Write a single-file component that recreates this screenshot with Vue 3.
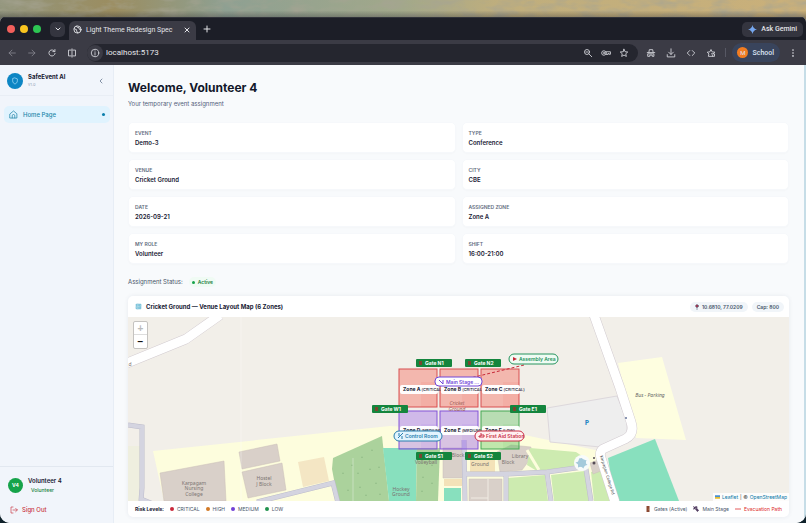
<script setup>
const details = [
  { label: 'Event', value: 'Demo-3' },
  { label: 'Type', value: 'Conference' },
  { label: 'Venue', value: 'Cricket Ground' },
  { label: 'City', value: 'CBE' },
  { label: 'Date', value: '2026-09-21' },
  { label: 'Assigned Zone', value: 'Zone A' },
  { label: 'My Role', value: 'Volunteer' },
  { label: 'Shift', value: '16:00-21:00' },
]

const zones = [
  { name: 'Zone A', level: 'CRITICAL', x: 399, y: 369, labelY: 385, tone: 'critical' },
  { name: 'Zone B', level: 'CRITICAL', x: 440, y: 369, labelY: 385, tone: 'critical' },
  { name: 'Zone C', level: 'CRITICAL', x: 481, y: 369, labelY: 385, tone: 'critical' },
  { name: 'Zone D', level: 'MEDIUM', x: 399, y: 411, labelY: 426, tone: 'medium' },
  { name: 'Zone E', level: 'MEDIUM', x: 440, y: 411, labelY: 426, tone: 'medium' },
  { name: 'Zone F', level: 'LOW', x: 481, y: 411, labelY: 426, tone: 'low' },
]

const gates = [
  { name: 'Gate N1', x: 416, y: 359 },
  { name: 'Gate N2', x: 465, y: 359 },
  { name: 'Gate W1', x: 372, y: 405 },
  { name: 'Gate E1', x: 510, y: 405 },
  { name: 'Gate S1', x: 416, y: 452 },
  { name: 'Gate S2', x: 465, y: 452 },
]

const risks = [
  { name: 'CRITICAL', tone: 'critical' },
  { name: 'HIGH', tone: 'high' },
  { name: 'MEDIUM', tone: 'medium' },
  { name: 'LOW', tone: 'low' },
]

const trees = [
  [343, 474], [352, 466], [362, 458], [372, 451], [348, 491], [360, 488], [358, 474], [370, 470],
  [376, 484], [379, 468], [366, 496], [380, 495], [422, 464], [432, 466], [423, 478], [432, 484], [422, 492],
]
</script>

<template>
  <div class="desktop">
    <svg class="wallpaper" aria-hidden="true" preserveAspectRatio="none" viewBox="0 0 806 30">
      <defs>
        <linearGradient id="paint" x1="0" x2="1">
          <stop offset="0" stop-color="#92957c" />
          <stop offset="0.14" stop-color="#9b8d60" />
          <stop offset="0.28" stop-color="#8ea092" />
          <stop offset="0.5" stop-color="#a2a88a" />
          <stop offset="0.62" stop-color="#bfae7d" />
          <stop offset="1" stop-color="#cab07a" />
        </linearGradient>
        <linearGradient id="shade" x2="0" y2="1">
          <stop offset="0.35" stop-color="#1c1e27" stop-opacity="0" />
          <stop offset="0.6" stop-color="#1c1e27" stop-opacity="0.35" />
        </linearGradient>
        <filter id="grain" x="0" y="0" width="1" height="1">
          <feTurbulence type="fractalNoise" baseFrequency="0.045 0.11" numOctaves="4" seed="8" />
          <feColorMatrix values="0 0 0 0 0.38  0 0 0 0 0.37  0 0 0 0 0.29  1.6 0 0 0 -0.65" />
        </filter>
      </defs>
      <rect width="806" height="30" fill="url(#paint)" />
      <rect width="806" height="30" filter="url(#grain)" />
      <rect width="806" height="30" fill="url(#shade)" />
    </svg>

    <div class="window">
      <header class="tabstrip">
        <div class="lights"><i class="red"></i><i class="yellow"></i><i class="green"></i></div>
        <button class="tab-menu" aria-label="Search tabs">
          <svg viewBox="0 0 8 8"><path d="M2 3l2 2 2-2" /></svg>
        </button>
        <div class="tab">
          <svg class="globe" viewBox="0 0 10 10">
            <circle cx="5" cy="5" r="4" />
            <path d="M1.3 4.2L4 5.2v1.4L5.2 8.800M4 1.200l.8 1.500 1.800.3L7 4.700l1.800 1.100" />
          </svg>
          <span>Light Theme Redesign Spec</span>
          <button aria-label="Close tab"><svg viewBox="0 0 8 8"><path d="M2 2l4 4M6 2L2 6" /></svg></button>
        </div>
        <button class="new-tab" aria-label="New tab"><svg viewBox="0 0 8 8"><path d="M4 1v6M1 4h6" /></svg></button>
        <button class="gemini">
          <svg viewBox="0 0 10 10"><path d="M5 0Q5.800 4.200 10 5 5.800 5.800 5 10 4.200 5.800 0 5 4.200 4.200 5 0z" /></svg>
          Ask Gemini
        </button>
      </header>

      <nav class="toolbar">
        <button class="tool dim" aria-label="Back"><svg viewBox="0 0 12 12"><path d="M10 6H2.500M6 2.500L2.500 6 6 9.500" /></svg></button>
        <button class="tool dim" aria-label="Forward"><svg viewBox="0 0 12 12"><path d="M2 6h7.500M6 2.500L9.500 6 6 9.500" /></svg></button>
        <button class="tool" aria-label="Reload"><svg viewBox="0 0 12 12"><path d="M9.200 4A3.700 3.700 0 1 0 9.700 6.500M9.500 1.800v2.500H7" /></svg></button>
        <button class="tool" aria-label="Split view"><svg viewBox="0 0 12 12"><path d="M5 2.500H1.800v7H5M7 2.500h3.200v7H7M6 1v10" /></svg></button>
        <div class="address">
          <span class="info"><svg viewBox="0 0 12 12"><circle cx="6" cy="6" r="4.500" /><path d="M6 5.500v3M6 3.500v.3" /></svg></span>
          <input type="text" value="localhost:5173" aria-label="Address" />
          <button class="tool" aria-label="Zoom"><svg viewBox="0 0 12 12"><circle cx="4.800" cy="4.800" r="3" /><path d="M7 7l3.500 3.500M3.500 4.800h2.600" /></svg></button>
          <button class="tool" aria-label="Passwords"><svg viewBox="0 0 12 12"><circle cx="3.500" cy="6" r="2.700" /><circle cx="3.500" cy="6" r=".6" /><path d="M6 4.500h5.300v3H9.500V6.500h-1v1.200H6" /></svg></button>
          <button class="tool" aria-label="Bookmark"><svg viewBox="0 0 12 12"><path d="M6 1.500l1.300 3 3.200.3-2.400 2.100.7 3.200L6 8.500l-2.800 1.600.7-3.200L1.500 4.800l3.200-.3z" /></svg></button>
        </div>
        <div class="extensions">
          <button class="tool" aria-label="Private extension"><svg viewBox="0 0 12 12"><path d="M3.500 5L4 2h4l.5 3M1.500 5.500h9M2.500 7h7v3h-2V8.500h-3V10h-2z" /></svg></button>
          <button class="tool" aria-label="Downloads"><svg viewBox="0 0 12 12"><path d="M6 1v6.500M3.200 5L6 7.800 8.800 5M1.500 8v2.700h9V8" /></svg></button>
          <button class="tool" aria-label="Developer tools"><svg viewBox="0 0 12 12"><path d="M4.500 3L1.500 6l3 3M7.500 3l3 3-3 3" /></svg></button>
          <button class="tool" aria-label="Extensions"><svg viewBox="0 0 12 12"><path d="M8 10H2.800l.7-2.800L1.500 5l3-.3L6 1.800l1.400 2.900 3.200.3-1.800 1.700M6.500 7h3.700v3H8V8.500" /></svg></button>
        </div>
        <span class="divider"></span>
        <button class="profile"><i>M</i>School</button>
        <button class="tool" aria-label="Menu"><svg class="solid" viewBox="0 0 12 12"><circle cx="6" cy="2.500" r="1" /><circle cx="6" cy="6" r="1" /><circle cx="6" cy="9.500" r="1" /></svg></button>
      </nav>

      <div class="page">
        <aside>
          <div class="brand">
            <span class="logo"><svg viewBox="0 0 12 12"><path d="M6 1.500l3.500 1.300v3C9.500 8.200 8 9.700 6 10.500 4 9.700 2.500 8.200 2.500 5.800v-3z" /></svg></span>
            <div><strong>SafeEvent AI</strong><small>v1.0</small></div>
            <button aria-label="Collapse sidebar"><svg viewBox="0 0 8 8"><path d="M5 2L3 4l2 2" /></svg></button>
          </div>
          <a class="nav-item" href="#home">
            <svg viewBox="0 0 12 12"><path d="M1.500 5L6 1.300 10.500 5v5.700h-9zM4.300 10.500V7.700a1.700 1.700 0 0 1 3.400 0v2.800" /></svg>
            <span>Home Page</span><i></i>
          </a>
          <div class="account">
            <div class="user">
              <span class="avatar">V4</span>
              <div><strong>Volunteer 4</strong><small>Volunteer</small></div>
            </div>
            <button class="sign-out">
              <svg viewBox="0 0 12 12"><path d="M4.500 1.500h-3v9h3M4.500 6H11M8.500 3.500L11 6 8.500 8.500" /></svg>Sign Out
            </button>
          </div>
        </aside>

        <main>
          <h1>Welcome, Volunteer 4</h1>
          <p class="lead">Your temporary event assignment</p>

          <dl class="details">
            <div v-for="d in details" :key="d.label"><dt>{{ d.label }}</dt><dd>{{ d.value }}</dd></div>
          </dl>

          <p class="status">Assignment Status: <span><i></i>Active</span></p>

          <section class="map-card">
            <header>
              <svg class="map-icon" viewBox="0 0 10 10"><rect x="1" y="1" width="8" height="8" rx="1" fill="#7fc4dc" /><path d="M1 7l3-3 2 2 3-3M4 1v8" stroke="#b5dde6" fill="none" /></svg>
              <h2>Cricket Ground — Venue Layout Map (6 Zones)</h2>
              <span class="chip"><svg viewBox="0 0 6 8"><path d="M3 4v4" stroke="#64748b" /><circle cx="3" cy="2.500" r="2" fill="#dc2645" /></svg>10.6810, 77.0209</span>
              <span class="chip">Cap: 800</span>
            </header>

            <div class="map">
              <svg class="canvas" viewBox="128 317 661 184" preserveAspectRatio="xMidYMid slice" role="img" aria-label="Venue map">
                <rect x="128" y="317" width="661" height="184" fill="#f2efe9" />
                <path d="M128 446h12v55h-12z" fill="#efefdf" />
                <path d="M153 451L390 426 520 434 600 451V501H164z" fill="#fdfddd" />
                <path class="bldg" d="M160 473l64-12 2 40h-62zM239 452l38-8 3 17-38 8zM242 472l40-9 4 27-38 8z" />
                <path d="M298 462l26-5 5 24-26 6z" fill="#f4e6c4" />
                <path d="M333 458l49-22 7 65h-51l-6-32z" fill="#abd29c" />
                <path d="M383 448h34l-1 53h-27zM444 488h17v13h-17z" fill="#88e0be" />
                <path d="M417 448h23l-2 53h-22z" fill="#abd29c" />
                <path class="tree" v-for="t in trees" :key="t.join()" :d="`M${t[0] - 1} ${t[1]}h2l-1-2zv1`" />
                <path class="bldg" d="M443 448h20v30h-20zM469 479h33v22h-33zM497 452l14-7 20 2v11l-9 12-22 2z" />
                <path d="M488 479v22M471 498h17" stroke="#f0ebe3" />
                <path d="M444 479h18v7h-18zM470 456h25v16h-25z" fill="#f3e2b8" />
                <path d="M530 448l46 4 12 8-9 6-42 5-10-6zM508 478l37-3 3 26h-40zM551 475l34-4 4 30h-35zM591 472l15-3 6 32h-18z" fill="#cdebb0" />
                <path d="M527 450l12 20" stroke="#fdfddd" stroke-width="3" />

                <g class="lane">
                  <path d="M128 425l14 2v61l-1 13M141 499l12 5M257 502l76-19 5 20M464 440l1 61M465 474h42l40-2 36-5M506 475v26M547 473l4 28M586 469l5 32" />
                </g>
                <g class="lane-top">
                  <path d="M128 425l14 2v61l-1 13M141 499l12 5M257 502l76-19 5 20M464 440l1 61M465 474h42l40-2 36-5M506 475v26M547 473l4 28M586 469l5 32" />
                </g>

                <path d="M547 408l70-12 10 25v13l-27 13-50-5z" fill="#eeeeee" stroke="#ddd8dc" />
                <path d="M618 363l44-6 24 83-50-2z" fill="#fefee0" />
                <path d="M608 458l47-19 24 62h-64z" fill="#88e0be" />
                <path class="bldg" d="M590 463l8-3 3 11-8 3z" />
                <g fill="none" stroke-linejoin="round">
                  <path d="M127 363l59-24 34-24M594 315l26 73 11 34q4 12-6 17l-22 10q-4 3-2 9l14 44" stroke="#d2cbd0" stroke-width="10" />
                  <path d="M127 363l59-24 34-24M594 315l26 73 11 34q4 12-6 17l-22 10q-4 3-2 9l14 44" stroke="#fff" stroke-width="9" />
                </g>
                <circle cx="582" cy="463" r="8" fill="#f8fbfa" />
                <circle cx="582" cy="463" r="4" fill="#a9cfe0" />
                <path d="M582 458l1.500 2.500 3-.5-1 3 2 2-3 .5-1 3-2.500-2-3 1v-3l-2.500-2 3-1 .5-3z" fill="#a5cadb" />
                <circle cx="594" cy="458" r="1" fill="#554c55" /><circle cx="594" cy="463" r="1.500" fill="#554c55" /><circle cx="626" cy="418" r="1" fill="#66749a" />
                <path d="M241 317v184M353 458v43" stroke="#ffffff" opacity=".35" />
                <g class="place">
                  <text x="194" y="485">Karpagam</text><text x="194" y="490">Nursing</text><text x="194" y="496">College</text>
                  <text x="264" y="480">Hostel</text><text x="264" y="486">J Block</text>
                  <text x="401" y="491">Hockey</text><text x="401" y="496">Ground</text>
                  <text x="520" y="458">Library</text><text x="508" y="464">Block</text><text x="458" y="457">Block</text>
                  <text x="426" y="464">Volleyball</text><text x="480" y="466">Ground</text>
                  <text class="big" x="650" y="397">Bus - Parking</text>
                  <text class="road" transform="translate(600 456) rotate(73)">Karpagam College Rd</text>
                  <text x="130" y="366">d</text>
                </g>
                <text x="587" y="425" class="parking">P</text>

                <g v-for="z in zones" :key="z.name" :class="['zone', z.tone]">
                  <rect :x="z.x" :y="z.y" width="38" height="38" />
                  <path :d="`M${z.x + 22} ${z.y + 13}h16v25h-16z`" />
                </g>
                <text class="ground" x="457" y="405">Cricket</text><text class="ground" x="457" y="411">Ground</text>
                <g v-for="z in zones" :key="z.level + z.name">
                  <rect :x="z.x + 1" :y="z.labelY" width="38" height="9" rx="2" fill="#fff" opacity=".96" />
                  <text class="zone-label" :x="z.x + 4" :y="z.labelY + 6">{{ z.name }} <tspan>({{ z.level }})</tspan></text>
                </g>

                <path d="M458 381l66-16" stroke="#c62838" stroke-width="1" stroke-dasharray="3 2" />
                <g v-for="g in gates" :key="g.name" class="gate">
                  <rect :x="g.x" :y="g.y" width="36" height="8" rx="1" />
                  <path :d="`M${g.x + 3} ${g.y + 2}h3v4h-3z`" fill="#7a4630" />
                  <text :x="g.x + 9" :y="g.y + 6">{{ g.name }}</text>
                </g>

                <g class="pin stage"><rect x="435" y="377" width="47" height="9" rx="4" /><path d="M439 380l4 4M443 380v4" /><text x="446" y="384">Main Stage ...</text></g>
                <g class="pin control"><rect x="394" y="431" width="48" height="10" rx="5" /><path d="M398 438l5-5M399 433v3M402 436v3" /><text x="405" y="438">Control Room</text></g>
                <g class="pin aid"><rect x="475" y="431" width="49" height="10" rx="5" /><path d="M479 437h5v-2h-3v1h-2zM481 433v2" /><text x="486" y="438">First Aid Station</text></g>
                <g class="pin assembly"><rect x="509" y="354" width="49" height="10" rx="5" /><path d="M513 357l4 2-4 2z" fill="#c62838" /><text x="519" y="361">Assembly Area</text></g>
              </svg>
              <div class="zoom"><button disabled>+</button><button>−</button></div>
              <div class="credit"><svg viewBox="0 0 6 4"><path fill="#4a8fd0" d="M0 0h6v2H0z" /><path fill="#e6bd2e" d="M0 2h6v2H0z" /></svg> <a href="#leaflet">Leaflet</a> | © <a href="#osm">OpenStreetMap</a></div>
            </div>

            <footer>
              <strong>Risk Levels:</strong>
              <span v-for="r in risks" :key="r.name" class="risk"><i :class="r.tone"></i>{{ r.name }}</span>
              <span class="key push"><svg viewBox="0 0 6 8"><path d="M1 0h4v8H1z" fill="#8b4932" /><circle cx="4" cy="4" r=".5" fill="#efca70" /></svg>Gates (Active)</span>
              <span class="key"><svg viewBox="0 0 8 8"><path d="M1 1l5 6M1 4l3-3M5 1v3l2 2" stroke="#533f62" fill="none" stroke-width="1.500" /></svg>Main Stage</span>
              <span class="key path"><svg viewBox="0 0 8 8"><path d="M0 4h8" stroke="#dc2626" /></svg>Evacuation Path</span>
            </footer>
          </section>
        </main>
      </div>
    </div>
  </div>
</template>

<style>
body { background: #10222b; }
</style>

<style scoped>
* { box-sizing: border-box; }
.desktop { position: relative; min-height: 100vh; padding-top: 17px; display: flex; font-family: Inter, "Liberation Sans", sans-serif; font-size: 6px; line-height: 8px; color: #182033; background: #10222b; }
button { border: 0; background: none; padding: 0; margin: 0; font: inherit; color: inherit; display: flex; align-items: center; justify-content: center; }
svg { display: block; fill: none; stroke: currentColor; stroke-linecap: round; }
a { color: inherit; text-decoration: none; }
h1, h2, p, dl, dd { margin: 0; }
.wallpaper { position: absolute; top: 0; left: 0; width: 100%; height: 30px; stroke: none; }
.window { position: relative; flex: 1; min-width: 0; display: flex; flex-direction: column; overflow: hidden; border-radius: 5px 5px 10px 10px; background: #f8fafc; }

.tabstrip { height: 23px; flex: none; display: flex; align-items: center; padding: 0 3px 0 7px; background: #1c1e27; color: #e3e4e8; border-top: 1px solid #30323a; }
.lights { display: flex; gap: 5px; }
.lights i { width: 8px; height: 8px; border-radius: 50%; }
.red { background: #f25f5b; }
.yellow { background: #f9c51f; }
.green { background: #2dc653; }
.tab-menu { width: 15px; height: 15px; margin: 0 4px 0 9px; border-radius: 5px; background: #34353f; }
.tab-menu svg, .tab button svg { width: 8px; height: 8px; }
.tab { align-self: flex-end; width: 127px; height: 19px; display: flex; align-items: center; gap: 4px; padding: 0 5px 2px 4px; border-radius: 6px 6px 0 0; background: #3b3b45; font-family: Roboto, sans-serif; font-size: 7px; }
.tab span { flex: 1; white-space: nowrap; }
.globe { width: 9px; height: 9px; }
.new-tab { margin-left: 7px; }
.new-tab svg { width: 8px; height: 8px; }
.gemini { margin-left: auto; height: 15px; padding: 0 6px; gap: 4px; border-radius: 5px; background: #34353f; font-family: Roboto, sans-serif; font-size: 7px; font-weight: 500; }
.gemini svg { width: 9px; height: 9px; fill: #76a7ee; stroke: none; }

.toolbar { height: 25px; flex: none; display: flex; align-items: center; padding: 0 3px 0 2px; background: #3b3b45; color: #dcdde3; }
.tool { width: 20px; height: 18px; }
.tool svg { width: 10px; height: 10px; }
.tool.dim { color: #85858f; }
.tool .solid { fill: currentColor; stroke: none; }
.address { flex: 1; min-width: 0; height: 18px; display: flex; align-items: center; margin-left: 5px; padding-right: 5px; border-radius: 9px; background: #25262f; }
.address .tool { width: 18px; }
.info { width: 16px; height: 16px; display: grid; place-items: center; border-radius: 50%; background: #3b3b45; }
.info svg { width: 10px; height: 10px; }
.address input { flex: 1; min-width: 0; border: 0; outline: 0; padding: 0 3px; background: none; color: #e6e7ec; font: 8px/12px Roboto, sans-serif; }
.extensions { display: flex; margin-left: 3px; }
.divider { width: 1px; height: 9px; margin: 0 6px 0 4px; background: #575864; }
.profile { height: 19px; padding: 0 6px 0 5px; gap: 4px; border-radius: 10px; background: #39445c; font: 500 7px/10px Roboto, sans-serif; color: #dce4f5; }
.profile i { width: 11px; height: 11px; border-radius: 50%; background: #f17c21; font: 6px/11px Roboto, sans-serif; text-align: center; }
.profile + .tool { margin-left: 3px; }

.page { flex: 1; display: flex; min-height: 0; border-right: 2px solid #c6dde7; }
aside { width: 114px; flex: none; display: flex; flex-direction: column; background: #f1f5fb; border-right: 1px solid #e7edf5; }
.brand { display: flex; align-items: center; gap: 5px; height: 31px; padding: 2px 8px 0 7px; border-bottom: 1px solid #e9eef5; }
.logo { width: 16px; height: 16px; display: grid; place-items: center; border-radius: 50%; background: #0d86c4; color: #b4e6ff; }
.logo svg { width: 8px; height: 8px; }
.brand div { flex: 1; }
.brand strong, .brand small, .user strong, .user small { display: block; }
.brand small { font-size: 4px; color: #94a3b8; }
.brand svg { width: 8px; height: 8px; }
.brand button { color: #8391a5; }
.nav-item { display: flex; align-items: center; gap: 5px; height: 17px; margin: 10px 3px 0 4px; padding: 0 5px; border-radius: 5px; background: #e0f3fe; color: #2387aa; font-weight: 500; }
.nav-item svg { width: 9px; height: 9px; }
.nav-item span { flex: 1; }
.nav-item i { width: 3px; height: 3px; border-radius: 50%; background: #087eac; }
.account { margin-top: auto; padding: 9px 8px; border-top: 1px solid #e2e8f0; }
.user { display: flex; align-items: center; gap: 5px; height: 18px; }
.avatar { width: 15px; height: 15px; border-radius: 50%; background: #16a34a; color: #fff; font: 700 5px/15px Inter, sans-serif; text-align: center; }
.user strong { line-height: 10px; font-weight: 600; }
.user small { padding-left: 3px; font-size: 5px; font-weight: 500; color: #18803d; }
.sign-out { margin-top: 12px; gap: 4px; padding-left: 2px; color: #c93642; font-weight: 500; }
.sign-out svg { width: 8px; height: 8px; }

main { flex: 1; min-width: 0; padding: 15px 15px 5px 14px; background: #f8fafc; }
h1 { font-size: 12px; line-height: 16px; font-weight: 700; color: #12172a; }
.lead { margin-top: 3px; line-height: 9px; color: #52607a; }
.details { display: grid; grid-template-columns: 1fr 1fr; gap: 6px; margin-top: 14px; }
.details div { height: 31px; padding: 6px; border-radius: 5px; background: #fff; border: 1px solid #f6f8fb; box-shadow: 0 1px 2px #1e2f4805; }
.details dt { font-size: 5px; line-height: 8px; font-weight: 600; color: #626c7e; text-transform: uppercase; }
.details dd { line-height: 11px; font-weight: 600; }
.status { display: flex; align-items: center; margin-top: 13px; line-height: 10px; color: #475569; }
.status span { display: flex; align-items: center; gap: 3px; margin-left: 6px; padding: 0 3px; border-radius: 5px; background: #f0fbf4; color: #18803d; font-weight: 600; font-size: 5px; }
.status i { width: 3px; height: 3px; border-radius: 50%; background: #16a34a; }

.map-card { margin-top: 9px; border-radius: 5px; overflow: hidden; background: #fff; box-shadow: 0 0 4px #25395714; }
.map-card header { height: 21px; display: flex; align-items: center; gap: 4px; padding: 0 5px 0 7px; }
.map-icon { width: 7px; height: 7px; stroke: none; }
h2 { flex: 1; font-size: 6px; line-height: 8px; font-weight: 700; }
.chip { display: flex; align-items: center; gap: 3px; padding: 1px 5px; border-radius: 5px; background: #f1f5f9; font-size: 5px; font-weight: 600; color: #475569; }
.chip svg { width: 4px; height: 6px; }
.map { position: relative; }
.canvas { width: 100%; stroke: none; font-family: Inter, sans-serif; stroke-linecap: butt; }
.bldg { fill: #d9d0c9; stroke: #cabfb8; stroke-width: 0.5; }
.tree { fill: #93bd88; }
.lane { fill: none; stroke: #bdbccb; stroke-width: 5; }
.lane-top { fill: none; stroke: #d4d4e0; stroke-width: 4; }
.place { font-family: "Noto Sans", sans-serif; font-size: 5px; fill: #7b7471; text-anchor: middle; }
.place .big { font-size: 5px; font-style: italic; fill: #666; }
.place .road { text-anchor: start; font-size: 4px; fill: #444; }
.parking { font: 700 7px "Noto Sans", sans-serif; fill: #2685c4; text-anchor: middle; }
.ground { font: italic 5px "Noto Sans", sans-serif; fill: #9c5b52; text-anchor: middle; }
.zone rect { fill-opacity: 0.35; stroke-width: 1; }
.zone path { fill-opacity: 0.08; }
.zone.critical { fill: #f64f43; stroke: #d84f50; }
.zone.medium { fill: #9255ec; stroke: #8355d7; }
.zone.low { fill: #4dbd50; stroke: #44a854; }
.zone path { stroke: none; }
.zone-label { font-size: 5px; font-weight: 700; fill: #172033; }
.zone-label tspan { font-size: 4px; font-weight: 500; }
.gate { fill: #14853d; }
.gate text { fill: #fff; font-size: 5px; font-weight: 700; }
.pin rect { fill: #fff; stroke: currentColor; stroke-width: 1; }
.pin path { stroke: currentColor; }
.pin text { fill: currentColor; font-size: 5px; font-weight: 600; }
.stage { color: #7047d8; }
.control { color: #277eae; }
.control rect { fill: #e2f4fe; }
.aid { color: #c93146; }
.aid rect { fill: #fff0f1; }
.assembly { color: #26945e; }
.assembly rect { fill: #effbf3; }
.assembly path { stroke: none; }
.zoom { position: absolute; top: 4px; left: 5px; border: 1px solid #c5c3c0; border-radius: 2px; background: #fff; }
.zoom button { width: 13px; height: 13px; font: 700 10px/13px "Liberation Sans", sans-serif; color: #111; }
.zoom button:disabled { color: #bbb; border-bottom: 1px solid #ddd; }
.credit { position: absolute; right: 0; bottom: 0; display: flex; align-items: center; gap: 2px; padding: 0 2px; background: #ffffffcc; font: 5px/8px Inter, sans-serif; color: #444; }
.credit a { color: #0878a8; }
.credit svg { width: 5px; height: 4px; stroke: none; }
.map-card footer { height: 16px; display: flex; align-items: center; gap: 6px; padding: 0 7px; font-size: 5px; color: #475569; }
.map-card footer strong { color: #182033; }
.risk, .key { display: flex; align-items: center; gap: 3px; }
.risk i { width: 4px; height: 4px; border-radius: 50%; }
i.critical { background: #c9273a; }
i.high { background: #d27925; }
i.medium { background: #7040d5; }
i.low { background: #20924d; }
.key svg { width: 6px; height: 6px; stroke: none; }
.push { margin-left: auto; }
.map-card .path { color: #dc2626; }
</style>
